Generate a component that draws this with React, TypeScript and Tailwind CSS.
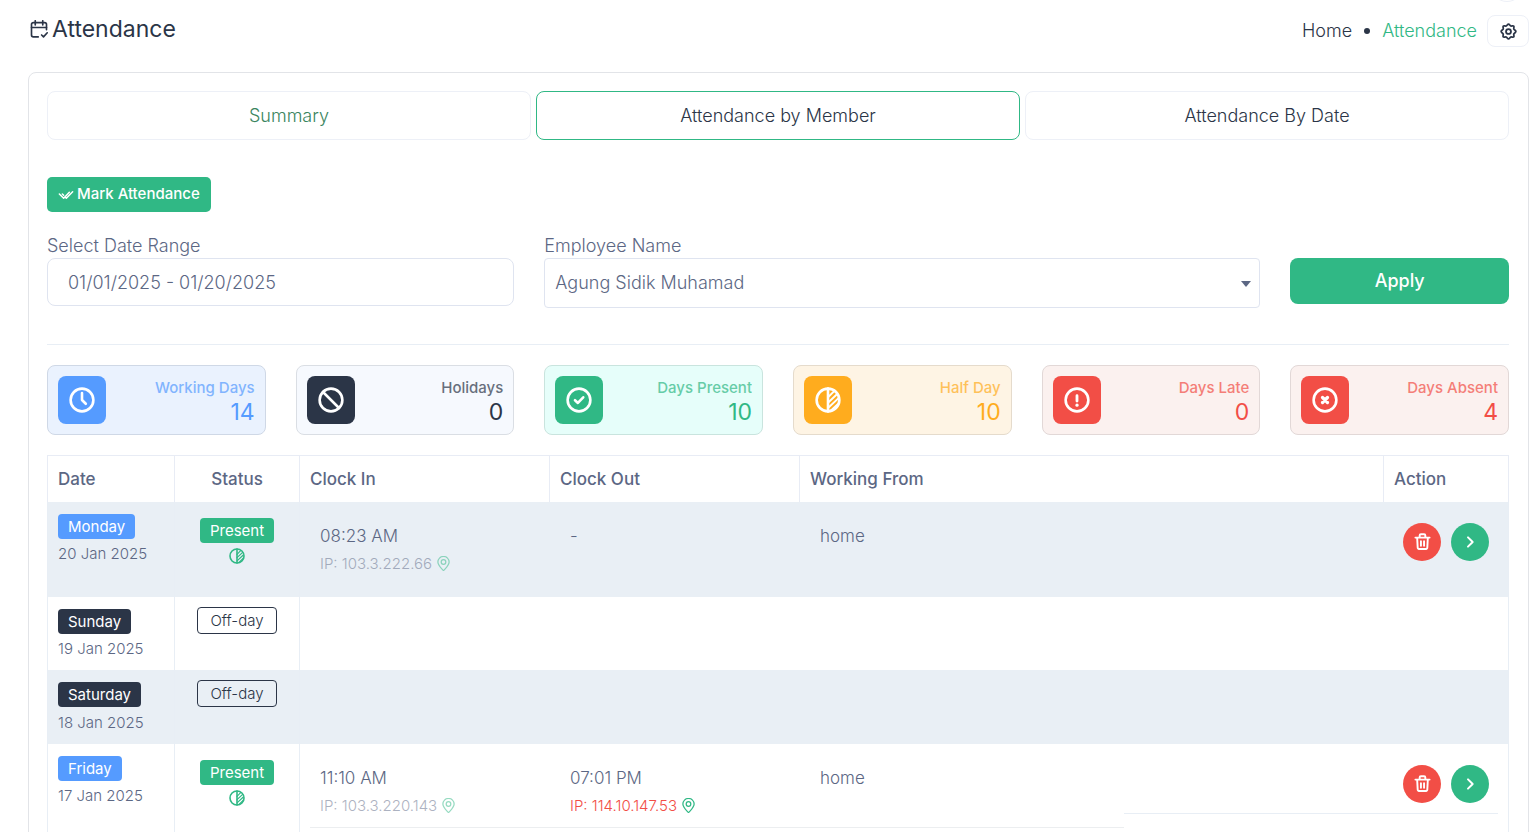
import { useState, type ReactNode } from 'react';
import { clsx } from 'clsx';

/* ---------- icons ---------- */

interface IconProps {
  className?: string;
}

function Svg({ className, children, strokeWidth = 2 }: IconProps & { children: ReactNode; strokeWidth?: number }) {
  return (
    <svg
      viewBox="0 0 24 24"
      fill="none"
      stroke="currentColor"
      strokeWidth={strokeWidth}
      strokeLinecap="round"
      strokeLinejoin="round"
      aria-hidden="true"
      className={className}
    >
      {children}
    </svg>
  );
}

const CalendarCheckIcon = ({ className }: IconProps) => (
  <Svg className={className} strokeWidth={2.2}>
    <path d="M22 13V6a2.500 2.500 0 0 0-2.500-2.500h-15A2.500 2.500 0 0 0 2 6v14a2.500 2.500 0 0 0 2.500 2.500H11" />
    <path d="M2 10h20M7 1v5.500M17 1v5.500" />
    <path d="M15.500 20l2.500 2.500 5-5.500" />
  </Svg>
);

const GearIcon = ({ className }: IconProps) => (
  <Svg className={className} strokeWidth={2.5}>
    <path d="M12 1.500c1.400 0 1.900 2.200 3.200 2.700s3.200-.9 4.200.1-.4 2.900.1 4.200 2.900 1.900 2.900 3.500-2.300 2.200-2.900 3.500.9 3.200-.1 4.200-2.900-.4-4.200.1-1.800 2.700-3.200 2.700-1.900-2.200-3.200-2.700-3.200.9-4.200-.1.400-2.900-.1-4.200S1.600 13.600 1.600 12s2.300-2.200 2.900-3.500-.9-3.200.1-4.200 2.900.4 4.200-.1 1.800-2.700 3.200-2.700z" />
    <circle cx="12" cy="12" r="3.500" />
  </Svg>
);

const DoubleCheckIcon = ({ className }: IconProps) => (
  <Svg className={className} strokeWidth={2.2}>
    <path d="M2 10.500l6.500 6.500 8.500-9M6.500 10.500l2 2M10.500 15l2 2L22 7" />
  </Svg>
);

const ClockIcon = ({ className }: IconProps) => (
  <Svg className={className} strokeWidth={2.4}>
    <circle cx="12" cy="12" r="10.500" />
    <path d="M12 5.500V12l3.500 3.500" />
  </Svg>
);

const BanIcon = ({ className }: IconProps) => (
  <Svg className={className} strokeWidth={2.4}>
    <circle cx="12" cy="12" r="10.500" />
    <path d="M4.600 4.600l14.800 14.800" />
  </Svg>
);

const CheckCircleIcon = ({ className }: IconProps) => (
  <Svg className={className} strokeWidth={2.4}>
    <circle cx="12" cy="12" r="10.500" />
    <path d="M8.300 12.200l2.700 2.500 4.900-5.200" />
  </Svg>
);

const HalfDayIcon = ({ className }: IconProps) => (
  <Svg className={className} strokeWidth={2.4}>
    <circle cx="12" cy="12" r="10.500" />
    <path d="M12 1.500v21" />
    <path d="M12 9.500l5.500-5.500M12 14.500l8.500-8M12.500 19l9-8.500M15 21.500l7-6.500" strokeWidth={1.8} />
  </Svg>
);

const AlertCircleIcon = ({ className }: IconProps) => (
  <Svg className={className} strokeWidth={2.4}>
    <circle cx="12" cy="12" r="10.500" />
    <path d="M12 8v5" strokeWidth={2.6} />
    <path d="M12 16.700v.1" strokeWidth={3} />
  </Svg>
);

const CloseCircleIcon = ({ className }: IconProps) => (
  <Svg className={className} strokeWidth={2.4}>
    <circle cx="12" cy="12" r="10.500" />
    <path d="M9.700 9.700l4.600 4.600M14.300 9.700l-4.600 4.600" strokeWidth={3} />
  </Svg>
);

const PinIcon = ({ className }: IconProps) => (
  <Svg className={className}>
    <path d="M12 23.500C8 19 3 15 3 9.700a9 9 0 0 1 18 0C21 15 16 19 12 23.500z" />
    <circle cx="12" cy="9.500" r="3.700" />
  </Svg>
);

const TrashIcon = ({ className }: IconProps) => (
  <Svg className={className} strokeWidth={2.7}>
    <path d="M2 6.500h20M4.500 7l.7 13.500a2.200 2.200 0 0 0 2.200 2.200h9.200a2.200 2.200 0 0 0 2.200-2.200L19.500 7M8 6V3.500A1.800 1.800 0 0 1 9.800 1.700h4.400A1.800 1.800 0 0 1 16 3.500V6M9.800 11.500v6.500M14.200 11.500v6.500" />
  </Svg>
);

const ChevronIcon = ({ className }: IconProps) => (
  <Svg className={className} strokeWidth={3}>
    <path d="M9 5l7 7-7 7" />
  </Svg>
);

/* ---------- data ---------- */

const tabs = ['Summary', 'Attendance by Member', 'Attendance By Date'];

const stats = [
  { label: 'Working Days', value: 14, icon: ClockIcon, card: 'bg-[#eaf2fe] border-[#cfd8e6]', box: 'bg-[#559bff]', text: 'text-[#559bff]' },
  { label: 'Holidays', value: 0, icon: BanIcon, card: 'bg-[#f6f9fe] border-[#dadee4]', box: 'bg-[#2b3547]', text: 'text-[#2b3547]' },
  { label: 'Days Present', value: 10, icon: CheckCircleIcon, card: 'bg-[#e6fefa] border-[#c9e4de]', box: 'bg-[#30b885]', text: 'text-[#30b885]' },
  { label: 'Half Day', value: 10, icon: HalfDayIcon, card: 'bg-[#fef4e4] border-[#e5dbcc]', box: 'bg-[#ffac1e]', text: 'text-[#ffac1e]' },
  { label: 'Days Late', value: 0, icon: AlertCircleIcon, card: 'bg-[#fbf1ef] border-[#e2d8d7]', box: 'bg-[#f24e46]', text: 'text-[#f24e46]' },
  { label: 'Days Absent', value: 4, icon: CloseCircleIcon, card: 'bg-[#fbf1ef] border-[#e2d8d7]', box: 'bg-[#f24e46]', text: 'text-[#f24e46]' },
];

interface Punch {
  time: string;
  ip?: string;
  outside?: boolean;
}

interface Day {
  day: string;
  date: string;
  clockIn?: Punch;
  clockOut?: Punch;
  from?: string;
  divided?: boolean;
}

const days: Day[] = [
  { day: 'Monday', date: '20 Jan 2025', clockIn: { time: '08:23 AM', ip: '103.3.222.66' }, clockOut: { time: '-' }, from: 'home' },
  { day: 'Sunday', date: '19 Jan 2025' },
  { day: 'Saturday', date: '18 Jan 2025' },
  {
    day: 'Friday',
    date: '17 Jan 2025',
    clockIn: { time: '11:10 AM', ip: '103.3.220.143' },
    clockOut: { time: '07:01 PM', ip: '114.10.147.53', outside: true },
    from: 'home',
    divided: true,
  },
];

/* ---------- pieces ---------- */

function PunchInfo({ punch }: { punch: Punch }) {
  return (
    <div className="w-[250px] shrink-0 pl-[10px]">
      <div className="leading-7">{punch.time}</div>
      {punch.ip && (
        <div className={clsx('flex items-center gap-1 text-[15px] leading-7', punch.outside ? 'text-[#f24e46]' : 'text-[#5c6784] opacity-50')}>
          IP: {punch.ip}
          <PinIcon className="size-[15px] text-[#30b885]" />
        </div>
      )}
    </div>
  );
}

function DayRow({ entry }: { entry: Day }) {
  const present = Boolean(entry.clockIn);

  return (
    <tr className="border-x border-[#e8eef5] align-top odd:bg-[#e9eff5]">
      <td className="border-r border-[#e8eef5] px-[10px] pt-3 pb-[6px]">
        <span className={clsx('inline-block rounded px-[10px] text-[15px] leading-[25px] font-normal text-white', present ? 'bg-[#559bff]' : 'bg-[#2b3547]')}>
          {entry.day}
        </span>
        <div className="text-[15px] leading-[30px]">{entry.date}</div>
      </td>
      <td className="border-r border-[#e8eef5] px-[10px] text-center">
        {present ? (
          <div className="flex flex-col items-center pt-4">
            <span className="rounded bg-[#30b885] px-[10px] text-[15px] leading-[25px] font-normal text-white">Present</span>
            <HalfDayIcon className="mt-[5px] size-4 text-[#30b885]" />
          </div>
        ) : (
          <div className="flex justify-center pt-[10px]">
            <span className="rounded border border-[#2b3547] px-3 text-[15px] leading-[25px] text-[#2b3547]">Off-day</span>
          </div>
        )}
      </td>
      <td colSpan={4} className="p-[10px]">
        {entry.clockIn && entry.clockOut && (
          <div className="flex items-start">
            <div className={clsx('flex grow pt-[10px]', entry.divided ? 'border-b border-[#eceef0] pb-[7px]' : 'pb-[9px]')}>
              <PunchInfo punch={entry.clockIn} />
              <PunchInfo punch={entry.clockOut} />
              <div className="pl-[10px] leading-7">{entry.from}</div>
            </div>
            <div className={clsx('flex w-[374px] justify-end gap-[10px] pt-[11px] pr-[9px] pb-[10px]', entry.divided && 'border-b border-[#e8eef5]')}>
              <button type="button" aria-label="Delete" className="flex size-[38px] items-center justify-center rounded-full bg-[#f24e46] text-white">
                <TrashIcon className="size-[17px]" />
              </button>
              <button type="button" aria-label="View details" className="flex size-[38px] items-center justify-center rounded-full bg-[#30b885] text-white">
                <ChevronIcon className="size-4" />
              </button>
            </div>
          </div>
        )}
      </td>
    </tr>
  );
}

export default function App() {
  const [tab, setTab] = useState('Attendance by Member');
  const [range, setRange] = useState('01/01/2025 - 01/20/2025');

  return (
    <div className="relative h-screen overflow-hidden bg-white pr-[9px] pl-7 font-['Inter','Liberation_Sans',sans-serif] text-[17px] font-light text-[#5c6784]">
      {/* bottom edge of the round top bar button */}
      <div className="absolute -top-8 right-[14px] size-[34px] rounded-full border border-[#edf0f7]" />

      <header className="flex items-start justify-between pt-[15px] text-[#2b3547]">
        <h1 className="flex items-center gap-1 pl-[2px] text-[23px] leading-7 font-normal">
          <CalendarCheckIcon className="size-[18px]" />
          Attendance
        </h1>
        <div className="flex items-center text-lg">
          <nav className="flex items-center">
            <a href="#home">Home</a>
            <span className="mx-3 size-[6px] rounded-full bg-[#2b3547]" />
            <a href="#attendance" className="text-[#30b885]">Attendance</a>
          </nav>
          <button type="button" aria-label="Settings" className="ml-[10px] flex h-8 w-[42px] items-center justify-center rounded-lg border border-[#edf0f7]">
            <GearIcon className="size-[17px]" />
          </button>
        </div>
      </header>

      <main className="mt-[25px] rounded-lg border border-[#e2e4e8] pt-[18px] pr-[19px] pb-6 pl-[18px]">
        <div role="tablist" className="grid grid-cols-3 gap-[5px] text-lg">
          {tabs.map((name) => (
            <button
              key={name}
              type="button"
              role="tab"
              aria-selected={tab === name}
              onClick={() => setTab(name)}
              className={clsx(
                'h-[49px] rounded-lg border',
                tab === name ? 'border-[#30b885]' : 'border-[#edf0f7]',
                name === 'Summary' ? 'text-[#3a8560]' : 'text-[#2b3547]'
              )}
            >
              {name}
            </button>
          ))}
        </div>

        <button type="button" className="mt-[37px] flex h-[35px] items-center gap-[3px] rounded-[5px] bg-[#30b885] px-[11px] text-[15px] font-medium text-white">
          <DoubleCheckIcon className="size-4" />
          Mark Attendance
        </button>

        <form className="mt-[22px] grid grid-cols-12 gap-x-[30px] text-lg" onSubmit={(e) => e.preventDefault()}>
          <div className="col-span-4">
            <label htmlFor="range" className="block leading-6">Select Date Range</label>
            <input
              id="range"
              value={range}
              onChange={(e) => setRange(e.target.value)}
              className="h-12 w-full rounded-lg border border-[#dfe4f0] px-5 outline-none"
            />
          </div>
          <div className="col-span-6">
            <label htmlFor="employee" className="block leading-6">Employee Name</label>
            <div className="relative">
              <select id="employee" className="h-[50px] w-full appearance-none rounded border border-[#dfe4f0] bg-white px-[10px] outline-none">
                <option>Agung Sidik Muhamad</option>
              </select>
              <svg viewBox="0 0 10 6" className="pointer-events-none absolute top-[23px] right-[9px] h-[6px] w-[10px] fill-[#5c6784]" aria-hidden="true">
                <path d="M0 0h10L5 6z" />
              </svg>
            </div>
          </div>
          <button type="submit" className="col-span-2 mt-6 h-[46px] rounded-lg bg-[#30b885] font-medium text-white">
            Apply
          </button>
        </form>

        <hr className="mt-9 border-[#e8eef5]" />

        <div className="mt-5 grid grid-cols-6 gap-[30px]">
          {stats.map(({ label, value, icon: Icon, card, box, text }) => (
            <div key={label} className={clsx('flex justify-between rounded-lg border p-[10px]', card)}>
              <div className={clsx('flex size-12 items-center justify-center rounded-lg text-white', box)}>
                <Icon className="size-[26px]" />
              </div>
              <div className={clsx('text-right', text)}>
                <div className="text-[15px] leading-6 font-medium opacity-70">{label}</div>
                <div className="text-[23px] leading-6 font-normal">{value}</div>
              </div>
            </div>
          ))}
        </div>

        <table className="mt-5 w-full table-fixed border-collapse text-left">
          <colgroup>
            <col className="w-[127px]" />
            <col className="w-[125px]" />
            <col className="w-[250px]" />
            <col className="w-[250px]" />
            <col />
            <col className="w-[125px]" />
          </colgroup>
          <thead>
            <tr>
              {['Date', 'Status', 'Clock In', 'Clock Out', 'Working From', 'Action'].map((name) => (
                <th key={name} className={clsx('h-[46px] border border-b-0 border-[#e8ecf5] px-[10px] pt-[2px] font-medium', name === 'Status' && 'text-center')}>
                  {name}
                </th>
              ))}
            </tr>
          </thead>
          <tbody>
            {days.map((entry) => (
              <DayRow key={entry.day} entry={entry} />
            ))}
          </tbody>
        </table>
      </main>
    </div>
  );
}
